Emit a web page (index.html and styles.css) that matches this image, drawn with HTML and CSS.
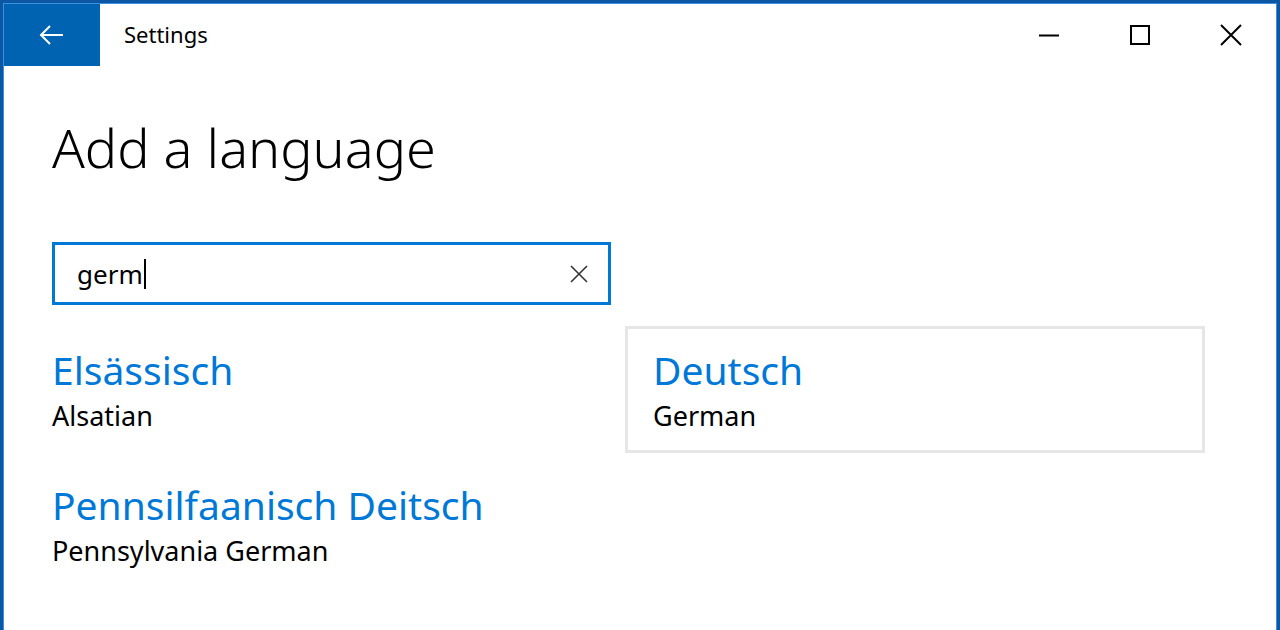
FILE: index.html
```html
<!DOCTYPE html>
<html lang="en">
<head>
  <meta charset="UTF-8">
  <title>Settings</title>
  <link rel="stylesheet" href="styles.css">
</head>
<body>
  <div class="window">
    <div class="titlebar">
      <button class="back-btn" aria-label="Back">
        <svg width="26" height="22" viewBox="0 0 26 22">
          <path d="M24 11H2M11 2L2 11l9 9" fill="none" stroke="#fff" stroke-width="2"/>
        </svg>
      </button>
      <div class="app-title">Settings</div>
      <div class="controls">
        <button class="ctl" aria-label="Minimize">
          <svg width="22" height="22" viewBox="0 0 22 22"><path d="M1 11.5h20" stroke="#000" stroke-width="2"/></svg>
        </button>
        <button class="ctl" aria-label="Maximize">
          <svg width="22" height="22" viewBox="0 0 22 22"><rect x="2" y="2" width="18" height="18" fill="none" stroke="#000" stroke-width="2"/></svg>
        </button>
        <button class="ctl" aria-label="Close">
          <svg width="22" height="22" viewBox="0 0 22 22"><path d="M1 1l20 20M21 1L1 21" stroke="#000" stroke-width="2"/></svg>
        </button>
      </div>
    </div>

    <div class="content">
      <h1>Add a language</h1>

      <div class="search">
        <span class="search-text">germ</span><span class="caret"></span>
        <svg class="clear" width="18" height="18" viewBox="0 0 18 18">
          <path d="M1 1l16 16M17 1L1 17" stroke="#333" stroke-width="1.6"/>
        </svg>
      </div>

      <div class="lang-grid">
        <div class="lang">
          <div class="lang-name">Elsässisch</div>
          <div class="lang-en">Alsatian</div>
        </div>
        <div class="lang selected">
          <div class="lang-name">Deutsch</div>
          <div class="lang-en">German</div>
        </div>
        <div class="lang">
          <div class="lang-name">Pennsilfaanisch Deitsch</div>
          <div class="lang-en">Pennsylvania German</div>
        </div>
      </div>
    </div>
  </div>
</body>
</html>
```

FILE: styles.css
```css
* {
  box-sizing: border-box;
}
html, body {
  margin: 0;
  padding: 0;
  width: 1280px;
  height: 630px;
  overflow: hidden;
  font-family: "Noto Sans", "Open Sans", sans-serif;
  background: #fff;
}

.window {
  width: 1280px;
  height: 630px;
  border: 3px solid #0b57a4;
  border-bottom: none;
  box-shadow: inset 1px 1px 0 #3d8fe0, inset -1px 0 0 #3d8fe0;
  padding: 1px 1px 0 1px;
}

/* title bar */
.titlebar {
  display: flex;
  align-items: center;
  height: 62px;
}
.back-btn {
  width: 96px;
  height: 62px;
  background: #0063b1;
  border: none;
  display: flex;
  align-items: center;
  justify-content: center;
  padding: 0;
}
.app-title {
  margin-left: 24px;
  font-size: 22px;
  color: #000;
  flex: 1;
  margin-top: -2px;
}
.controls {
  display: flex;
  height: 62px;
}
.ctl {
  width: 91px;
  height: 62px;
  background: transparent;
  border: none;
  display: flex;
  align-items: center;
  justify-content: center;
  padding: 0;
}

/* page */
.content {
  padding: 0 48px;
}
h1 {
  margin: 46px 0 0 0;
  font-size: 54px;
  font-weight: 300;
  line-height: 70px;
  color: #000;
}

.search {
  margin-top: 60px;
  width: 559px;
  height: 63px;
  border: 3px solid #0078d7;
  display: flex;
  align-items: center;
  padding: 0 20px 0 22px;
}
.search-text {
  font-size: 26px;
  color: #000;
  line-height: 1;
}
.caret {
  width: 2px;
  height: 30px;
  background: #000;
  margin-left: 1px;
}
.clear {
  margin-left: auto;
}

.lang-grid {
  display: grid;
  grid-template-columns: 580px 580px;
  column-gap: 21px;
  row-gap: 8px;
  margin: 21px 0 0 -28px;
}
.lang {
  height: 127px;
  border: 3px solid transparent;
  padding: 15px 25px 0 25px;
}
.lang.selected {
  border-color: #e6e6e6;
}
.lang-name {
  font-size: 39px;
  line-height: 52px;
  color: #0078d7;
}
.lang-en {
  font-size: 27px;
  line-height: 40px;
  color: #000;
}
```
